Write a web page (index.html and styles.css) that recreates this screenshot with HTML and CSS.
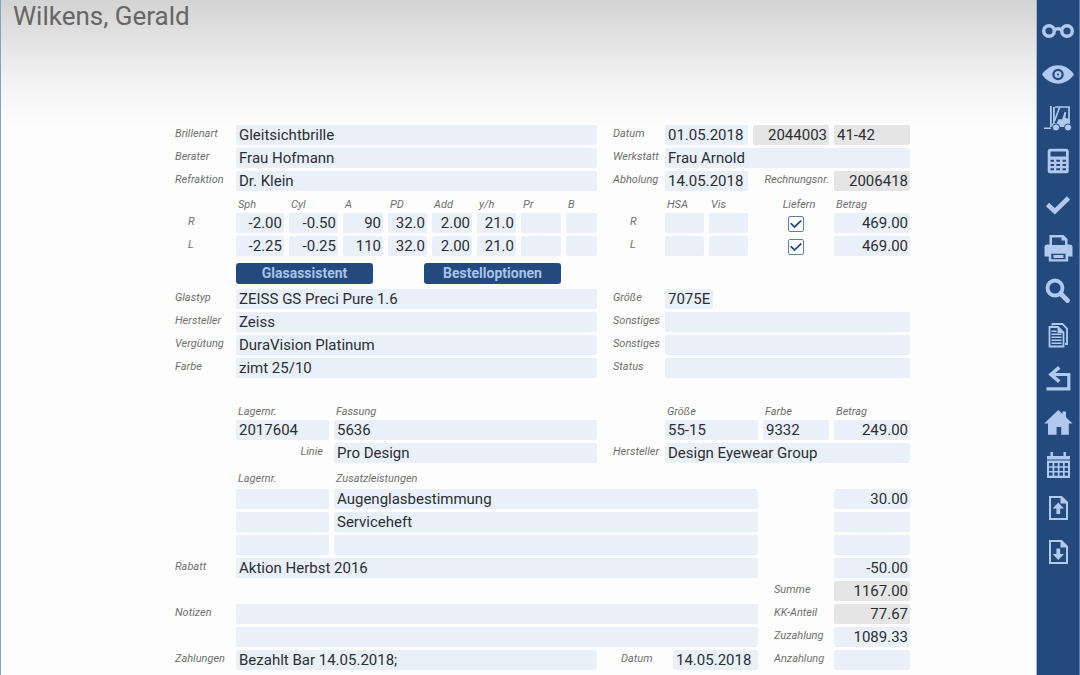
FILE: index.html
```
<!DOCTYPE html>
<html lang="de">
<head>
<meta charset="utf-8">
<meta name="viewport" content="width=device-width, initial-scale=1">
<title>Wilkens, Gerald</title>
<link rel="stylesheet" href="styles.css">
</head>
<body>
<div class="app">
<main class="page">
  <h1 class="customer">Wilkens, Gerald</h1>
  <form class="order">
    <div class="row halves">
      <label for="art">Brillenart</label><input id="art" value="Gleitsichtbrille">
      <div class="side quad">
        <label for="datum">Datum</label><input id="datum" class="span2" value="01.05.2018">
        <input class="num calc" aria-label="Auftragsnummer" value="2044003" readonly><input class="calc" aria-label="Fach" value="41-42" readonly>
      </div>
    </div>
    <div class="row halves">
      <label for="berater">Berater</label><input id="berater" value="Frau Hofmann">
      <div class="side"><label for="werkstatt">Werkstatt</label><input id="werkstatt" value="Frau Arnold"></div>
    </div>
    <div class="row halves">
      <label for="refraktion">Refraktion</label><input id="refraktion" value="Dr. Klein">
      <div class="side quad">
        <label for="abholung">Abholung</label><input id="abholung" class="span2" value="14.05.2018">
        <label for="rechnung" class="right">Rechnungsnr.</label><input id="rechnung" class="num calc" value="2006418" readonly>
      </div>
    </div>
    <div class="row halves head">
      <div class="lens">
        <label for="sph">Sph</label><label for="cyl">Cyl</label><label for="achse">A</label><label for="pd">PD</label><label for="add">Add</label><label for="yh">y/h</label><label for="pr">Pr</label><label for="basis">B</label>
      </div>
      <div class="side quad headings">
        <label for="hsa">HSA</label><label for="vis">Vis</label><label for="liefern" class="mid">Liefern</label><label for="betrag">Betrag</label>
      </div>
    </div>
    <div class="row halves">
      <span class="eye">R</span>
      <div class="lens">
        <input id="sph" class="num" value="-2.00"><input id="cyl" class="num" value="-0.50"><input id="achse" class="num" value="90"><input id="pd" class="num" value="32.0"><input id="add" class="num" value="2.00"><input id="yh" class="num" value="21.0"><input id="pr" class="num"><input id="basis" class="num">
      </div>
      <div class="side quad">
        <span class="eye deep">R</span><input id="hsa"><input id="vis"><input id="liefern" type="checkbox" class="tick" checked><input id="betrag" class="num" value="469.00">
      </div>
    </div>
    <div class="row halves">
      <span class="eye">L</span>
      <div class="lens">
        <input aria-label="Sph L" class="num" value="-2.25"><input aria-label="Cyl L" class="num" value="-0.25"><input aria-label="A L" class="num" value="110"><input aria-label="PD L" class="num" value="32.0"><input aria-label="Add L" class="num" value="2.00"><input aria-label="y/h L" class="num" value="21.0"><input aria-label="Pr L" class="num"><input aria-label="B L" class="num">
      </div>
      <div class="side quad">
        <span class="eye deep">L</span><input aria-label="HSA L"><input aria-label="Vis L"><input aria-label="Liefern L" type="checkbox" class="tick" checked><input aria-label="Betrag L" class="num" value="469.00">
      </div>
    </div>
    <div class="actions">
      <button type="button" class="action">Glasassistent</button>
      <button type="button" class="action">Bestelloptionen</button>
    </div>
    <div class="row halves">
      <label for="glastyp">Glastyp</label><input id="glastyp" value="ZEISS GS Preci Pure 1.6">
      <div class="side"><label for="glasgr">Größe</label><input id="glasgr" class="short" value="7075E"></div>
    </div>
    <div class="row halves">
      <label for="glasher">Hersteller</label><input id="glasher" value="Zeiss">
      <div class="side"><label for="sonst1">Sonstiges</label><input id="sonst1"></div>
    </div>
    <div class="row halves">
      <label for="verg">Vergütung</label><input id="verg" value="DuraVision Platinum">
      <div class="side"><label for="sonst2">Sonstiges</label><input id="sonst2"></div>
    </div>
    <div class="row halves">
      <label for="farbe">Farbe</label><input id="farbe" value="zimt 25/10">
      <div class="side"><label for="status">Status</label><input id="status"></div>
    </div>
    <div class="row halves head far">
      <div class="stock"><label for="lager">Lagernr.</label><label for="fassung">Fassung</label></div>
      <div class="side frame headings"><label for="frgr">Größe</label><label for="frfarbe">Farbe</label><label for="frbetrag">Betrag</label></div>
    </div>
    <div class="row halves">
      <div class="stock"><input id="lager" value="2017604"><input id="fassung" value="5636"></div>
      <div class="side frame headings"><input id="frgr" value="55-15"><input id="frfarbe" value="9332"><input id="frbetrag" class="num" value="249.00"></div>
    </div>
    <div class="row halves">
      <div class="stock"><label for="linie" class="line">Linie</label><input id="linie" value="Pro Design"></div>
      <div class="side"><label for="frher">Hersteller</label><input id="frher" value="Design Eyewear Group"></div>
    </div>
    <div class="row wide head near">
      <div class="stock"><label for="zl1">Lagernr.</label><label for="zus1">Zusatzleistungen</label></div>
    </div>
    <div class="row wide">
      <div class="stock"><input id="zl1"><input id="zus1" value="Augenglasbestimmung"></div>
      <input class="num sum" aria-label="Betrag 1" value="30.00">
    </div>
    <div class="row wide">
      <div class="stock"><input aria-label="Lagernr. 2"><input aria-label="Zusatzleistung 2" value="Serviceheft"></div>
      <input class="num sum" aria-label="Betrag 2">
    </div>
    <div class="row wide">
      <div class="stock"><input aria-label="Lagernr. 3"><input aria-label="Zusatzleistung 3"></div>
      <input class="num sum" aria-label="Betrag 3">
    </div>
    <div class="row wide">
      <label for="rabatt">Rabatt</label><input id="rabatt" value="Aktion Herbst 2016">
      <input class="num sum" aria-label="Rabattbetrag" value="-50.00">
    </div>
    <div class="row wide">
      <label for="summe" class="total">Summe</label><input id="summe" class="num sum calc" value="1167.00" readonly>
    </div>
    <div class="row wide">
      <label for="notiz">Notizen</label><input id="notiz">
      <label for="kk" class="total">KK-Anteil</label><input id="kk" class="num sum calc" value="77.67" readonly>
    </div>
    <div class="row wide">
      <input class="body" aria-label="Notizen 2">
      <label for="zuz" class="total">Zuzahlung</label><input id="zuz" class="num sum" value="1089.33">
    </div>
    <div class="row wide">
      <label for="zahl">Zahlungen</label>
      <div class="payment"><input id="zahl" value="Bezahlt Bar 14.05.2018;"><label for="zdatum">Datum</label><input id="zdatum" class="date" value="14.05.2018"></div>
      <label for="anz" class="total">Anzahlung</label><input id="anz" class="num sum">
    </div>
  </form>
</main>
<nav class="rail" aria-label="Werkzeuge">
  <div class="tools">
    <button class="tool" aria-label="Brille"><svg viewBox="0 0 32 32"><g fill="none" stroke="currentColor" stroke-width="3.400"><circle cx="7" cy="16" r="5.300"/><circle cx="25" cy="16" r="5.300"/><path d="M12 15c2-1.600 6-1.600 8 0"/></g></svg></button>
    <button class="tool" aria-label="Ansicht"><svg viewBox="0 0 32 32"><path fill-rule="evenodd" d="M0 16.500C4 10.500 10 7.300 16 7.300S28 10.500 32 16.500c-4 6-10 9.200-16 9.200S4 22.500 0 16.500zM16 10.800a5.700 5.700 0 1 0 0 11.400a5.700 5.700 0 0 0 0-11.400z"/><path fill-rule="evenodd" d="M16 13a3.500 3.500 0 1 0 0 7a3.500 3.500 0 0 0 0-7zm0 2.500a1 1 0 1 1 0 2a1 1 0 0 1 0-2z"/></svg></button>
    <button class="tool" aria-label="Lager"><svg viewBox="0 0 32 32"><path d="M8 4h1.800v21H8zM11 5h1.800v17H11zM2 25.500h7V27H2z"/><path fill="none" stroke="currentColor" stroke-width="1.700" d="M13 5h14v14M17.500 5.500L12.500 19"/><path d="M22.500 10l1.800.6-1 5.200 4.700 1.700V25H10v-3.500h4.500l2-4.300h3.700z"/><circle cx="14" cy="25.500" r="3.600" stroke="#23497d"/><circle cx="26" cy="25.500" r="3.600" stroke="#23497d"/></svg></button>
    <button class="tool" aria-label="Rechner"><svg viewBox="0 0 32 32"><rect x="5.700" y="3.700" width="21" height="24.500" rx="2.500"/><g fill="#23497d"><path d="M8.500 6.500h15.500v5H8.500z"/><path d="M8.500 14.800h3.500v2H8.500zM14.300 14.800h3.700v2h-3.700zM20.500 14.800h3.500v2h-3.500zM8.500 19h3.500v2H8.500zM14.300 19h3.700v2h-3.700zM20.500 19h3.500v2h-3.500zM8.500 23.200h3.500v2H8.500zM14.300 23.200h3.700v2h-3.700zM20.500 23.200h3.500v2h-3.500z"/></g></svg></button>
    <button class="tool" aria-label="Fertig"><svg viewBox="0 0 32 32"><path fill="none" stroke="currentColor" stroke-width="4.600" d="M5.500 15.500l7.300 6.800L26.500 9"/></svg></button>
    <button class="tool" aria-label="Drucken"><svg viewBox="0 0 32 32"><path fill-rule="evenodd" d="M7.500 3h14l4 4v5.500h2.300q2.700 0 2.700 2.700v9.300h-4.300v5H6.800v-5H2.500v-9.300q0-2.700 2.700-2.700h2.300zM10 5.500V13h13V8.500h-3.500v-3zM9.300 21.800v5.500h14.200v-5.500z"/><path d="M11.500 23h10v3h-10z"/></svg></button>
    <button class="tool" aria-label="Suchen"><svg viewBox="0 0 32 32"><g fill="none" stroke="currentColor"><circle cx="13" cy="13" r="7.500" stroke-width="3.800"/><path stroke-width="4.800" stroke-linecap="round" d="M19.500 19.500l6 6"/></g></svg></button>
    <button class="tool" aria-label="Dokumente"><svg viewBox="0 0 32 32"><g fill="none" stroke="currentColor" stroke-width="1.800"><path d="M10.500 6.500V5h10L25 9.500V25h-2"/><path d="M7.500 8H16l5.500 5.500v14h-14z"/></g><path d="M15.500 7.500L22 14h-6.500z"/><path d="M9.500 11.500h5V13h-5zM9.500 14.500h10V16h-10zM9.500 17.500h10V19h-10zM9.500 20.500h10V22h-10zM9.500 23.500h10V25h-10z"/></svg></button>
    <button class="tool" aria-label="Zurück"><svg viewBox="0 0 32 32"><path fill="none" stroke="currentColor" stroke-width="3.200" d="M4.500 26.800h22.300V12.500H9.500"/><path fill="none" stroke="currentColor" stroke-width="3.600" d="M17.300 5.300L9 12.500l8.300 7.200"/></svg></button>
    <button class="tool" aria-label="Start"><svg viewBox="0 0 32 32"><path d="M2.200 17.500L16.300 4l4.200 4V5.500H24v5.800l6.500 6.200h-3.700v11.200h-7.600V21h-4.600v7.700H6V17.500z"/></svg></button>
    <button class="tool" aria-label="Kalender"><svg viewBox="0 0 32 32"><path d="M5 7h3.500V3H11v4h10.500V3H24v4h4v22H5z"/><path fill="#23497d" d="M5 10.500h23v1H5z"/><g fill="#23497d"><path id="calrow" d="M7 14h3.500v3.300H7zM12.300 14h3.500v3.300h-3.500zM17.500 14H21v3.300h-3.500zM22.700 14H26v3.300h-3.300z"/><use href="#calrow" y="4.700"/><use href="#calrow" y="9.400"/></g></svg></button>
    <button class="tool" aria-label="Hochladen"><svg viewBox="0 0 32 32"><path fill="none" stroke="currentColor" stroke-width="2" d="M8 5h11.500l5.500 5.500V27H8z"/><path d="M18.500 4l7.500 7.500h-7.500z"/><path d="M16.300 10.500l5.700 6h-3.800v5.500h-3.800v-5.500h-3.800z"/></svg></button>
    <button class="tool" aria-label="Herunterladen"><svg viewBox="0 0 32 32"><path fill="none" stroke="currentColor" stroke-width="2" d="M8 5h11.500l5.500 5.500V27H8z"/><path d="M18.500 4l7.500 7.500h-7.500z"/><path d="M16.300 24l5.700-6h-3.800v-5.500h-3.800V18h-3.800z"/></svg></button>
  </div>
</nav>
</div>
</body>
</html>
```
FILE: styles.css
```
* { box-sizing: border-box; }

body {
  margin: 0;
  font-family: Roboto, "Liberation Sans", sans-serif;
  color: #2b2e33;
  background: #fdfdfd;
}

.app { display: flex; min-height: 100vh; }

.page {
  flex: 1;
  min-width: 0;
  border-left: 1px solid #7fa3c4;
  background: linear-gradient(#d3d3d3, #e3e3e3 40px, #f2f2f2 80px, #fdfdfd 130px);
}

.customer {
  margin: 0;
  height: 125px;
  padding-left: 12px;
  font-size: 26px;
  font-weight: 400;
  line-height: 32px;
  color: #666;
}

.order {
  display: flex;
  flex-direction: column;
  gap: 3px;
  padding: 0 126px 4px 174px;
}

/* rows: label column, stretching body, fixed tail */
.row { display: grid; min-height: 20px; }
.halves { grid-template-columns: 61px minmax(0, 1fr) 313px; }
.wide { grid-template-columns: 61px minmax(0, 1fr) 76px 76px; }

label, .eye {
  font-size: 11px;
  font-style: italic;
  line-height: 18px;
  color: #6f6f6f;
  white-space: nowrap;
}

input {
  width: 100%;
  min-width: 0;
  height: 20px;
  margin: 0;
  padding: 0 2px 0 3px;
  border: 0;
  border-radius: 2px;
  background: #eaf0f9;
  font: 15px/20px Roboto, "Liberation Sans", sans-serif;
  color: inherit;
}

.num { text-align: right; }
.calc { background: #e5e5e5; }
.short { width: 48px; }
.eye { padding-left: 13px; }
.deep { padding-left: 17px; }
.right { text-align: right; }
.mid { text-align: center; padding-left: 16px; }
.span2 { grid-column: span 2; }

.side {
  display: grid;
  grid-template-columns: 52px minmax(0, 1fr);
  padding-left: 16px;
}
.quad { grid-template-columns: 47px 39px 39px 76px 76px; column-gap: 5px; }
.frame { grid-template-columns: 93px 66px 76px; column-gap: 5px; }
.headings { padding-left: 68px; }
.quad.headings { grid-template-columns: 39px 39px 76px 76px; }

.lens, .stock { grid-column: 2; display: grid; column-gap: 5px; }
.lens { grid-template-columns: 48px 49px 40px 39px 40px 39px 40px minmax(0, 1fr); }
.stock { grid-template-columns: 93px minmax(0, 1fr); }

.head { min-height: 16px; align-items: end; }
.head label { line-height: 10px; padding-left: 2px; }
.head .mid { padding-left: 16px; }
.far { min-height: 36px; }
.near { min-height: 20px; padding-bottom: 2px; }
.line { text-align: right; padding-right: 6px; }

.tick {
  appearance: none;
  justify-self: center;
  width: 16px;
  height: 16px;
  margin: 3px 0 0 10px;
  padding: 0;
  border: 1px solid #5d7fa8;
  background: #fff;
  display: grid;
  place-items: center;
}
.tick:checked::before {
  content: "";
  width: 12px;
  height: 9px;
  background: #23497d;
  clip-path: polygon(0 48%, 12% 36%, 38% 70%, 88% 6%, 100% 18%, 38% 96%);
}

.actions {
  display: flex;
  gap: 51px;
  padding: 4px 0 2px 61px;
}
.action {
  width: 137px;
  height: 21px;
  padding: 0;
  border: 0;
  border-radius: 3px;
  background: #23497d;
  color: #a9c3ea;
  font: 700 14px/21px Roboto, "Liberation Sans", sans-serif;
}

.sum { grid-column: 4; }
.total { grid-column: 3; padding-left: 16px; }
.body { grid-column: 2; }
.payment { display: grid; grid-template-columns: minmax(0, 1fr) 76px 85px; }
.payment label { padding-left: 24px; }

.rail {
  width: 44px;
  padding-top: 10px;
  border-left: 1px solid #9db8d6;
  border-right: 1px solid #5b7fae;
  background: #23497d;
}
.tools {
  display: flex;
  flex-direction: column;
  justify-content: space-between;
  height: 563px;
}
.tool {
  display: flex;
  align-items: center;
  justify-content: center;
  height: 42px;
  width: 100%;
  padding: 0;
  border: 0;
  background: none;
  color: #b1c9ee;
}
.tool svg { flex: none; width: 32px; height: 32px; fill: currentColor; }
```
